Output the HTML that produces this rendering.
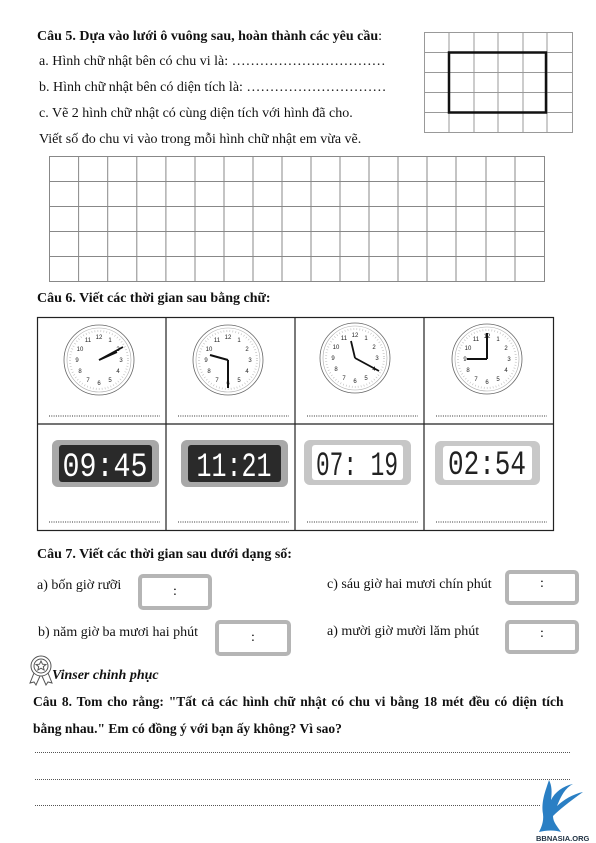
<!DOCTYPE html>
<html><head><meta charset="utf-8"><style>
body{margin:0;background:#fff;width:596px;height:843px;position:relative;overflow:hidden;font-family:"Liberation Serif",serif;color:#111}
.t{position:absolute;font-size:14px;white-space:nowrap}
.b{font-weight:bold}
.dl{position:absolute;left:35px;width:535px;border-top:1px dotted #555}
.box{position:absolute;border:4px solid #b5b5b5;border-radius:5px;background:#fff;text-align:center;font-size:14px;line-height:20px;box-sizing:border-box}
</style></head><body>
<div class="t b" style="left:37px;top:29px">Câu 5. Dựa vào lưới ô vuông sau, hoàn thành các yêu cầu<span style="font-weight:normal">:</span></div>
<div class="t" style="left:39px;top:54px">a. Hình chữ nhật bên có chu vi là: ……………………………</div>
<div class="t" style="left:39px;top:80px">b. Hình chữ nhật bên có diện tích là: …………………………</div>
<div class="t" style="left:39px;top:106px">c. Vẽ 2 hình chữ nhật có cùng diện tích với hình đã cho.</div>
<div class="t" style="left:39px;top:132px">Viết số đo chu vi vào trong mỗi hình chữ nhật em vừa vẽ.</div>

<svg style="position:absolute;left:0;top:0" width="596" height="300">
<g stroke="#999" stroke-width="1" fill="none">
<rect x="424.5" y="32.5" width="148" height="100"/>
<path d="M449 32V133M474 32V133M498 32V133M523 32V133M547 32V133M424 52.5H572M424 72.5H572M424 92.5H572M424 112.5H572"/>
<rect x="49.5" y="156.5" width="495" height="125" stroke="#888"/>
<path stroke="#888" d="M78.6 156V281M107.7 156V281M136.8 156V281M165.9 156V281M195 156V281M224 156V281M253 156V281M282 156V281M311 156V281M340 156V281M369 156V281M398 156V281M427 156V281M456 156V281M486 156V281M515 156V281M49 181.5H544M49 206.5H544M49 231.5H544M49 256.5H544"/>
</g>
<rect x="449" y="52.5" width="97" height="60" fill="none" stroke="#111" stroke-width="2.5"/>
</svg>

<div class="t b" style="left:37px;top:291px">Câu 6. Viết các thời gian sau bằng chữ:</div>

<svg style="position:absolute;left:0;top:310px" width="596" height="225">
<defs>
<g id="face">
<circle r="35" fill="#fff" stroke="#666" stroke-width="0.8"/>
<circle r="32" fill="none" stroke="#aaa" stroke-width="0.6"/>
<circle r="29" fill="none" stroke="#bbb" stroke-width="2" stroke-dasharray="0.6 2.4"/>
<g font-family="Liberation Sans" font-size="6" text-anchor="middle" fill="#222">
<text x="0" y="-21">12</text><text x="11" y="-18">1</text><text x="19" y="-9">2</text><text x="22" y="2">3</text><text x="19" y="13">4</text><text x="11" y="22">5</text><text x="0" y="25">6</text><text x="-11" y="22">7</text><text x="-19" y="13">8</text><text x="-22" y="2">9</text><text x="-19" y="-9">10</text><text x="-11" y="-18">11</text>
</g></g></defs>
<g stroke="#222" fill="none">
<rect x="37.5" y="7.5" width="516" height="213" stroke-width="1.2"/>
<path d="M37 114H553M166 7V221M295 7V221M424 7V221" stroke-width="1.2"/>
</g>
<g transform="translate(99,50)"><use href="#face"/><path d="M0 0L24 -13M0 0L18 -8" stroke="#111" stroke-width="1.8"/></g>
<g transform="translate(228,50)"><use href="#face"/><path d="M0 0L0 28M0 0L-18 -5" stroke="#111" stroke-width="2"/></g>
<g transform="translate(355,48)"><use href="#face"/><path d="M0 0L-4 -17M0 0L24 13" stroke="#111" stroke-width="1.8"/></g>
<g transform="translate(487,49)"><use href="#face"/><path d="M0 0L0 -26M0 0L-20 0" stroke="#111" stroke-width="2"/></g>
<g font-family="Liberation Mono" font-size="34">
<rect x="52" y="130" width="107" height="47" rx="6" fill="#a8a8a8"/><rect x="59" y="135" width="93" height="37" rx="3" fill="#2a2a2a"/><text x="105" y="166" text-anchor="middle" fill="#fff" textLength="85" lengthAdjust="spacingAndGlyphs">09:45</text>
<rect x="181" y="130" width="107" height="47" rx="6" fill="#a8a8a8"/><rect x="188" y="135" width="93" height="37" rx="3" fill="#2a2a2a"/><text x="234" y="166" text-anchor="middle" fill="#fff" textLength="75" lengthAdjust="spacingAndGlyphs">11:21</text>
<rect x="304" y="130" width="107" height="45" rx="6" fill="#c6c6c6"/><rect x="312" y="135" width="91" height="35" rx="3" fill="#fff"/><text x="357" y="165" text-anchor="middle" fill="#222" textLength="82" lengthAdjust="spacingAndGlyphs">07: 19</text>
<rect x="435" y="131" width="105" height="44" rx="6" fill="#c8c8c8"/><rect x="443" y="136" width="89" height="34" rx="3" fill="#fff"/><text x="487" y="164" text-anchor="middle" fill="#222" textLength="78" lengthAdjust="spacingAndGlyphs">02:54</text>
</g>
<g stroke="#333" stroke-dasharray="1 1.3" stroke-width="1">
<path d="M49 106H160M178 106H289M307 106H418M436 106H547M49 212H160M178 212H289M307 212H418M436 212H547"/>
</g>
</svg>

<div class="t b" style="left:37px;top:547px">Câu 7. Viết các thời gian sau dưới dạng số:</div>
<div class="t" style="left:37px;top:578px">a) bốn giờ rưỡi</div>
<div class="box" style="left:138px;top:574px;width:74px;height:36px;padding-top:4px">:</div>
<div class="t" style="left:327px;top:577px">c) sáu giờ hai mươi chín phút</div>
<div class="box" style="left:505px;top:570px;width:74px;height:35px">:</div>
<div class="t" style="left:38px;top:625px">b) năm giờ ba mươi hai phút</div>
<div class="box" style="left:215px;top:620px;width:76px;height:36px;padding-top:4px">:</div>
<div class="t" style="left:327px;top:624px">a) mười giờ mười lăm phút</div>
<div class="box" style="left:505px;top:620px;width:74px;height:34px">:</div>

<svg style="position:absolute;left:29px;top:655px" width="25" height="32"><g fill="none" stroke="#555" stroke-width="1"><circle cx="12" cy="11" r="10"/><circle cx="12" cy="11" r="7"/><path d="M12 6l1.5 3.2 3.4.3-2.6 2.2.8 3.3-3.1-1.8-3.1 1.8.8-3.3-2.6-2.2 3.4-.3z"/><path d="M5 18L1 28l4-1 2 3 4-9M19 18l4 10-4-1-2 3-4-9"/></g></svg>
<div class="t b" style="left:52px;top:668px;font-style:italic;font-size:14px">Vinser chinh phục</div>
<div class="t b" style="left:33px;top:694px;font-size:13.5px;word-spacing:1.5px">Câu 8. Tom cho rằng: "Tất cả các hình chữ nhật có chu vi bằng 18 mét đều có diện tích</div>
<div class="t b" style="left:33px;top:721px;font-size:13.5px">bằng nhau." Em có đồng ý với bạn ấy không? Vì sao?</div>
<div class="dl" style="top:752px"></div>
<div class="dl" style="top:779px"></div>
<div class="dl" style="top:805px;width:505px"></div>

<svg style="position:absolute;left:535px;top:780px" width="61" height="63"><path d="M14 0C10 12 6 22 8 34 9 42 6 48 4 52 12 50 20 50 26 52 22 46 18 42 18 36 24 30 34 22 48 12 38 14 28 20 22 26 26 16 30 8 38 4 28 6 20 12 16 20 17 12 17 6 14 0Z" fill="#2a7fc4"/><text x="1" y="61" font-family="Liberation Sans" font-weight="bold" font-size="7.5" fill="#234">BBNASIA.ORG</text></svg>
</body></html>
